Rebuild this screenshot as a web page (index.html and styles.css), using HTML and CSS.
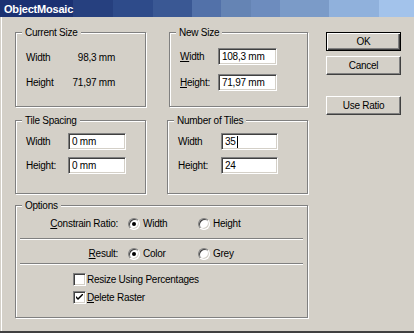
FILE: index.html
```html
<!DOCTYPE html>
<html lang="en">
<head>
    <meta charset="UTF-8">
    <title>ObjectMosaic</title>
    <link rel="stylesheet" href="styles.css">
</head>
<body>
<div class="window">
    <div class="titlebar"><span class="title">ObjectMosaic</span></div>
    <div class="content">
        <div class="groups">
            <!--当前尺寸-->
            <div class="group group-current">
                <div class="group-title">Current Size</div>
                <div class="field-rows">
                    <div class="field-row"><span class="field-label">Width</span><span class="field-value">98,3 mm</span></div>
                    <div class="field-row"><span class="field-label">Height</span><span class="field-value">71,97 mm</span></div>
                </div>
            </div>
            <!--新尺寸-->
            <div class="group group-new">
                <div class="group-title">New Size</div>
                <div class="field-rows">
                    <div class="field-row"><span class="field-label"><u>W</u>idth</span><span class="textbox">108,3 mm</span></div>
                    <div class="field-row"><span class="field-label"><u>H</u>eight:</span><span class="textbox">71,97 mm</span></div>
                </div>
            </div>
            <!--间距-->
            <div class="group group-tile">
                <div class="group-title">Tile Spacing</div>
                <div class="field-rows">
                    <div class="field-row"><span class="field-label">Width</span><span class="textbox">0 mm</span></div>
                    <div class="field-row"><span class="field-label">Height:</span><span class="textbox">0 mm</span></div>
                </div>
            </div>
            <!--数量-->
            <div class="group group-number">
                <div class="group-title">Number of Tiles</div>
                <div class="field-rows">
                    <div class="field-row"><span class="field-label">Width</span><span class="textbox">35<span class="caret"></span></span></div>
                    <div class="field-row"><span class="field-label">Height:</span><span class="textbox">24</span></div>
                </div>
            </div>
            <!--选项-->
            <div class="group group-options">
                <div class="group-title">Options</div>
                <div class="option-row option-first">
                    <span class="option-label"><u>C</u>onstrain Ratio:</span>
                    <span class="choice"><span class="radio checked"></span>Width</span>
                    <span class="choice"><span class="radio"></span>Height</span>
                </div>
                <div class="separator"></div>
                <div class="option-row option-second">
                    <span class="option-label"><u>R</u>esult:</span>
                    <span class="choice"><span class="radio checked"></span>Color</span>
                    <span class="choice"><span class="radio"></span>Grey</span>
                </div>
                <div class="separator separator-second"></div>
                <div class="check-row check-first"><span class="checkbox"></span>Resize Using Percentages</div>
                <div class="check-row">
                    <span class="checkbox"><svg width="7" height="7" viewBox="0 0 7 7"><path d="M0 2 L0 4 L2 6 L7 1 L7 -1 L2 4 Z" fill="#000"/></svg></span><u>D</u>elete Raster
                </div>
            </div>
        </div>
        <div class="buttons">
            <div class="btn btn-default">OK</div>
            <div class="btn btn-cancel">Cancel</div>
            <div class="btn btn-ratio">Use Ratio</div>
        </div>
    </div>
</div>
</body>
</html>
```

FILE: styles.css
```css
body {
    margin: 0;
    padding: 0;
    font-family: "Liberation Sans", Arial, sans-serif;
    font-size: 10px;
    letter-spacing: -0.25px;
    color: #000;
}

.window {
    width: 414px;
    height: 333px;
    box-sizing: border-box;
    background: #d4d0c8;
    border-bottom: 2px solid #404040;
    box-shadow: inset 1px 0 #d4d0c8, inset 2px 0 #fff;
}

.titlebar {
    height: 17px;
    display: flex;
    align-items: center;
    padding-left: 4px;
    background: linear-gradient(to right,
        #1b3172 0 73px, #26407f 73px 113px, #2e4b8a 113px 153px,
        #3a5894 153px 192px, #5271a9 192px 221px, #6584b4 221px 251px,
        #6d8cbe 251px 280px, #7b9bc8 280px 329px, #90b1dc 329px 379px,
        #a3c3eb 379px);
}

.title {
    color: #fff;
    font-weight: bold;
    font-size: 11px;
    letter-spacing: -0.2px;
}

.content {
    display: flex;
    padding: 15px 0 0 15px;
}

.groups {
    display: grid;
    grid-template-columns: 131px 139px;
    column-gap: 23px;
    align-items: start;
}

.group {
    box-sizing: border-box;
    border: 1px solid #808080;
    box-shadow: inset 1px 1px #fff, 1px 1px #fff;
}

.group-title {
    width: fit-content;
    margin: -7px 0 0 6px;
    padding: 0 3px;
    line-height: 13px;
    background: #d4d0c8;
}

.group-current,
.group-new {
    height: 75px;
}

.group-tile,
.group-number {
    height: 74px;
    margin-top: 13px;
}

.group-number {
    width: 141px;
    margin-left: -2px;
}

.group-options {
    grid-column: 1 / 3;
    height: 113px;
    margin-top: 11px;
}

.field-rows {
    display: flex;
    flex-direction: column;
    padding-left: 10px;
}

.field-row {
    display: flex;
    align-items: center;
    height: 17px;
}

.field-label {
    width: 42px;
}

.field-value {
    width: 47px;
    text-align: right;
}

.group-current .field-rows {
    padding-top: 10px;
    gap: 8px;
}

.group-new .field-rows {
    padding-top: 9px;
    gap: 9px;
}

.group-new .field-label {
    width: 38px;
}

.group-tile .field-rows,
.group-number .field-rows {
    padding-top: 6px;
    gap: 7px;
}

.group-number .field-label {
    width: 43px;
}

.textbox {
    box-sizing: border-box;
    display: flex;
    align-items: center;
    width: 59px;
    height: 17px;
    padding-left: 3px;
    background: #fff;
    border: 1px solid;
    border-color: #808080 #fff #fff #808080;
    box-shadow: inset 1px 1px #404040, inset -1px -1px #d4d0c8;
}

.group-tile .textbox {
    width: 58px;
}

.group-number .textbox {
    width: 57px;
}

.caret {
    width: 1px;
    height: 12px;
    margin-left: 1px;
    background: #000;
}

.option-row {
    display: flex;
    align-items: center;
    height: 17px;
}

.option-first {
    margin-top: 3px;
}

.option-second {
    margin-top: 5px;
}

.option-label {
    width: 102px;
    text-align: right;
    margin-right: 10px;
}

.choice {
    display: flex;
    align-items: center;
    width: 70px;
}

.radio {
    box-sizing: border-box;
    display: flex;
    align-items: center;
    justify-content: center;
    width: 12px;
    height: 12px;
    margin-right: 3px;
    border-radius: 50%;
    background: #fff;
    border: 1px solid;
    border-color: #808080 #fff #fff #808080;
    box-shadow: inset 1px 1px #404040, inset -1px -1px #d4d0c8;
}

.radio.checked::after {
    content: "";
    width: 4px;
    height: 4px;
    border-radius: 50%;
    background: #000;
}

.separator {
    height: 1px;
    margin: 6px 4px 0;
    background: #808080;
    border-bottom: 1px solid #fff;
}

.separator-second {
    margin-top: 1px;
}

.check-row {
    display: flex;
    align-items: center;
    height: 17px;
    padding-left: 57px;
}

.check-first {
    margin-top: 6px;
    margin-bottom: 1px;
}

.checkbox {
    box-sizing: border-box;
    display: flex;
    align-items: center;
    justify-content: center;
    width: 13px;
    height: 13px;
    margin-right: 1px;
    background: #fff;
    border: 1px solid;
    border-color: #808080 #fff #fff #808080;
    box-shadow: inset 1px 1px #404040, inset -1px -1px #d4d0c8;
}

.buttons {
    display: flex;
    flex-direction: column;
    margin-left: 18px;
}

.btn {
    box-sizing: border-box;
    width: 75px;
    height: 19px;
    display: flex;
    align-items: center;
    justify-content: center;
    border: 1px solid;
    border-color: #fff #404040 #404040 #fff;
    box-shadow: inset -1px -1px #808080;
}

.btn-default {
    border-color: #000;
    box-shadow: inset 1px 1px #fff, inset -1px -1px #404040, inset -2px -2px #808080;
}

.btn-cancel {
    margin-top: 5px;
}

.btn-ratio {
    margin-top: 21px;
}
```
